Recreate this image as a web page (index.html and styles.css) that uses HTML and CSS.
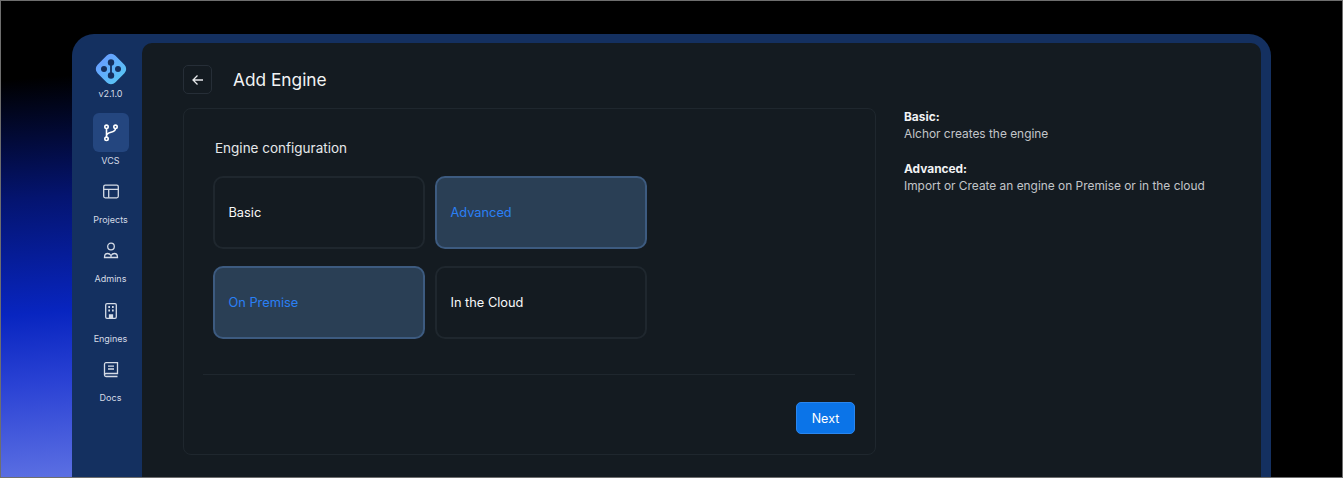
FILE: index.html
```html
<!DOCTYPE html>
<html lang="en">
<head>
  <meta charset="UTF-8">
  <title>Add Engine</title>
  <link rel="stylesheet" href="styles.css">
</head>
<body>
  <div class="frame">
    <!-- sidebar -->
    <nav class="sidebar">
      <div class="logo">
        <svg width="34" height="34" viewBox="0 0 34 34">
          <defs>
            <linearGradient id="logoFill" x1="0" y1="0" x2="1" y2="0">
              <stop offset="0" stop-color="#66a0ff"/>
              <stop offset="1" stop-color="#5ac2f6"/>
            </linearGradient>
          </defs>
          <rect x="4.500" y="4.500" width="25" height="25" rx="6" transform="rotate(45 17 17)" fill="url(#logoFill)"/>
          <path d="M17 10V24" stroke="#15305f" stroke-width="1.800"/>
          <circle cx="17" cy="10.500" r="3.200" fill="#15305f"/>
          <circle cx="17" cy="23.500" r="3.200" fill="#15305f"/>
          <circle cx="10" cy="17" r="3" fill="#15305f"/>
          <circle cx="24" cy="17" r="3" fill="#15305f"/>
        </svg>
        <span class="version">v2.1.0</span>
      </div>

      <a class="nav-item active">
        <span class="nav-icon">
          <svg width="20" height="20" viewBox="0 0 20 20" fill="none" stroke="#fff" stroke-width="1.600">
            <circle cx="5.500" cy="3.800" r="1.700"/>
            <circle cx="14.500" cy="3.800" r="1.700"/>
            <circle cx="5.500" cy="15.800" r="1.700"/>
            <path d="M5.500 5.500V14.100M14.500 5.500C14.500 10.500 5.500 8 5.500 13"/>
          </svg>
        </span>
        <span class="nav-label">VCS</span>
      </a>
      <a class="nav-item">
        <span class="nav-icon">
          <svg width="20" height="20" viewBox="0 0 20 20" fill="none" stroke="#d5dbe6" stroke-width="1.300">
            <rect x="2.700" y="3.200" width="14.600" height="12.600" rx="1.500"/>
            <path d="M2.700 7.300H17.300M7.700 7.300V15.800"/>
          </svg>
        </span>
        <span class="nav-label">Projects</span>
      </a>
      <a class="nav-item">
        <span class="nav-icon">
          <svg width="20" height="20" viewBox="0 0 20 20" fill="none" stroke="#d5dbe6" stroke-width="1.300">
            <circle cx="10" cy="5.500" r="3.300"/>
            <path d="M3.500 16.500H16.500C16.500 13.500 15 12.500 13.500 12.500C12 12.500 11 13 10 14.500C9 13 8 12.500 6.500 12.500C5 12.500 3.500 13.500 3.500 16.500ZM10 14.500V16.500"/>
          </svg>
        </span>
        <span class="nav-label">Admins</span>
      </a>
      <a class="nav-item">
        <span class="nav-icon">
          <svg width="20" height="20" viewBox="0 0 20 20" fill="none" stroke="#d5dbe6" stroke-width="1.300">
            <rect x="4.700" y="2.700" width="10.600" height="14.600" rx="1.300"/>
            <path d="M8.500 17V14H11.500V17" fill="#d5dbe6"/>
            <path d="M7.300 6H9M11 6H12.700M7.300 9.500H9M11 9.500H12.700" stroke-width="1.800"/>
          </svg>
        </span>
        <span class="nav-label">Engines</span>
      </a>
      <a class="nav-item">
        <span class="nav-icon">
          <svg width="20" height="20" viewBox="0 0 20 20" fill="none" stroke="#d5dbe6" stroke-width="1.300">
            <path d="M3.500 15V4.200C3.500 3.300 4.200 2.700 5 2.700H16.500V13.500H5C4.200 13.500 3.500 14.100 3.500 15C3.500 15.900 4.200 16.500 5 16.500H16.500"/>
            <path d="M7 6.200H13M7 9H13"/>
          </svg>
        </span>
        <span class="nav-label">Docs</span>
      </a>
    </nav>

    <!-- main panel -->
    <main class="panel">
      <header class="page-head">
        <button class="back-btn">
          <svg width="14" height="14" viewBox="0 0 14 14" fill="none" stroke="#e6e8ea" stroke-width="1.300">
            <path d="M12 7H2M6.500 2.500L2 7L6.500 11.500"/>
          </svg>
        </button>
        <h1>Add Engine</h1>
      </header>

      <div class="content">
        <section class="card">
          <div class="card-body">
            <h2>Engine configuration</h2>
            <div class="options">
              <div class="option">Basic</div>
              <div class="option selected">Advanced</div>
              <div class="option selected">On Premise</div>
              <div class="option">In the Cloud</div>
            </div>
          </div>
          <div class="card-foot">
            <button class="next-btn">Next</button>
          </div>
        </section>

        <aside class="help">
          <p><strong>Basic:</strong><br>Alchor creates the engine</p>
          <p><strong>Advanced:</strong><br>Import or Create an engine on Premise or in the cloud</p>
        </aside>
      </div>
    </main>
  </div>
</body>
</html>
```

FILE: styles.css
```css
body {
  margin: 0;
  height: 478px;
  overflow: hidden;
  box-sizing: border-box;
  border: 1px solid #6e6e6e;
  padding: 33px 71px 0 71px;
  font-family: Inter, "Liberation Sans", sans-serif;
  color: #fff;
  background-color: #000;
  background-image: linear-gradient(176deg, #000 80px, #041470 200px, #0825c0 315px, #2a42d4 385px, #5a6ee2 478px);
  background-size: 72px 100%;
  background-repeat: no-repeat;
}
.frame {
  display: flex;
  height: 444px;
  padding: 9px 10px 0 0;
  box-sizing: border-box;
  background: #143060;
  border-radius: 22px 22px 0 0;
}

/* sidebar */
.sidebar {
  width: 70px;
  flex: none;
  box-sizing: border-box;
  padding-left: 7px;
  display: flex;
  flex-direction: column;
  align-items: center;
}
.logo {
  display: flex;
  flex-direction: column;
  align-items: center;
  margin-top: 9px;
  height: 61px;
}
.version {
  font-size: 9px;
  line-height: 12px;
  margin-top: 2px;
  color: #d5dbe6;
}
.nav-item {
  display: flex;
  flex-direction: column;
  align-items: center;
  height: 59.400px;
  color: #d5dbe6;
}
.nav-icon {
  width: 36px;
  height: 39px;
  display: flex;
  align-items: center;
  justify-content: center;
  border-radius: 6px;
}
.nav-item.active .nav-icon {
  background: #24467f;
}
.nav-label {
  font-size: 9px;
  line-height: 12px;
  margin-top: 2.500px;
}

/* main panel */
.panel {
  flex: 1;
  background: #141b21;
  border-radius: 10px 10px 0 0;
  padding: 22px 41px 0;
}
.page-head {
  display: flex;
  align-items: center;
  gap: 21px;
  margin-bottom: 14px;
}
.back-btn {
  width: 29px;
  height: 29px;
  padding: 0;
  display: flex;
  align-items: center;
  justify-content: center;
  background: none;
  border: 1px solid #262e37;
  border-radius: 5px;
}
h1 {
  margin: 0;
  font-size: 17.300px;
  font-weight: 400;
  color: #f2f3f4;
}
.content {
  display: flex;
  gap: 28px;
}
.card {
  width: 693px;
  height: 347px;
  flex: none;
  box-sizing: border-box;
  border: 1px solid #1f272e;
  border-radius: 8px;
  padding: 0 20px 0 19px;
  display: flex;
  flex-direction: column;
}
.card-body {
  height: 266px;
  box-sizing: border-box;
  padding: 30px 0 0 10px;
  border-bottom: 1px solid #1f272e;
}
h2 {
  margin: 0 0 19px 2px;
  font-size: 13.500px;
  line-height: 18px;
  font-weight: 400;
  color: #e6e8ea;
}
.options {
  display: grid;
  grid-template-columns: 212px 212px;
  grid-auto-rows: 73px;
  gap: 17px 10px;
}
.option {
  box-sizing: border-box;
  display: flex;
  align-items: center;
  padding-left: 13.500px;
  border: 2px solid #1f272e;
  border-radius: 10px;
  font-size: 12.800px;
  font-weight: 400;
  color: #f7f8f8;
}
.option.selected {
  background: #2a3f55;
  border-color: #3d5b80;
  color: #2a80f5;
}
.card-foot {
  display: flex;
  justify-content: flex-end;
  padding-top: 27px;
}
.next-btn {
  width: 59px;
  height: 32px;
  background: #0b74e8;
  border: 1px solid #2a86ee;
  border-radius: 5px;
  color: #fff;
  font-family: Inter, "Liberation Sans", sans-serif;
  font-size: 12.500px;
}

/* help text on the right */
.help {
  font-size: 11.900px;
  line-height: 17px;
  color: #c2c5c9;
}
.help p {
  margin: 0 0 18px 0;
}
.help strong {
  color: #f2f3f4;
  font-weight: 700;
}
```
